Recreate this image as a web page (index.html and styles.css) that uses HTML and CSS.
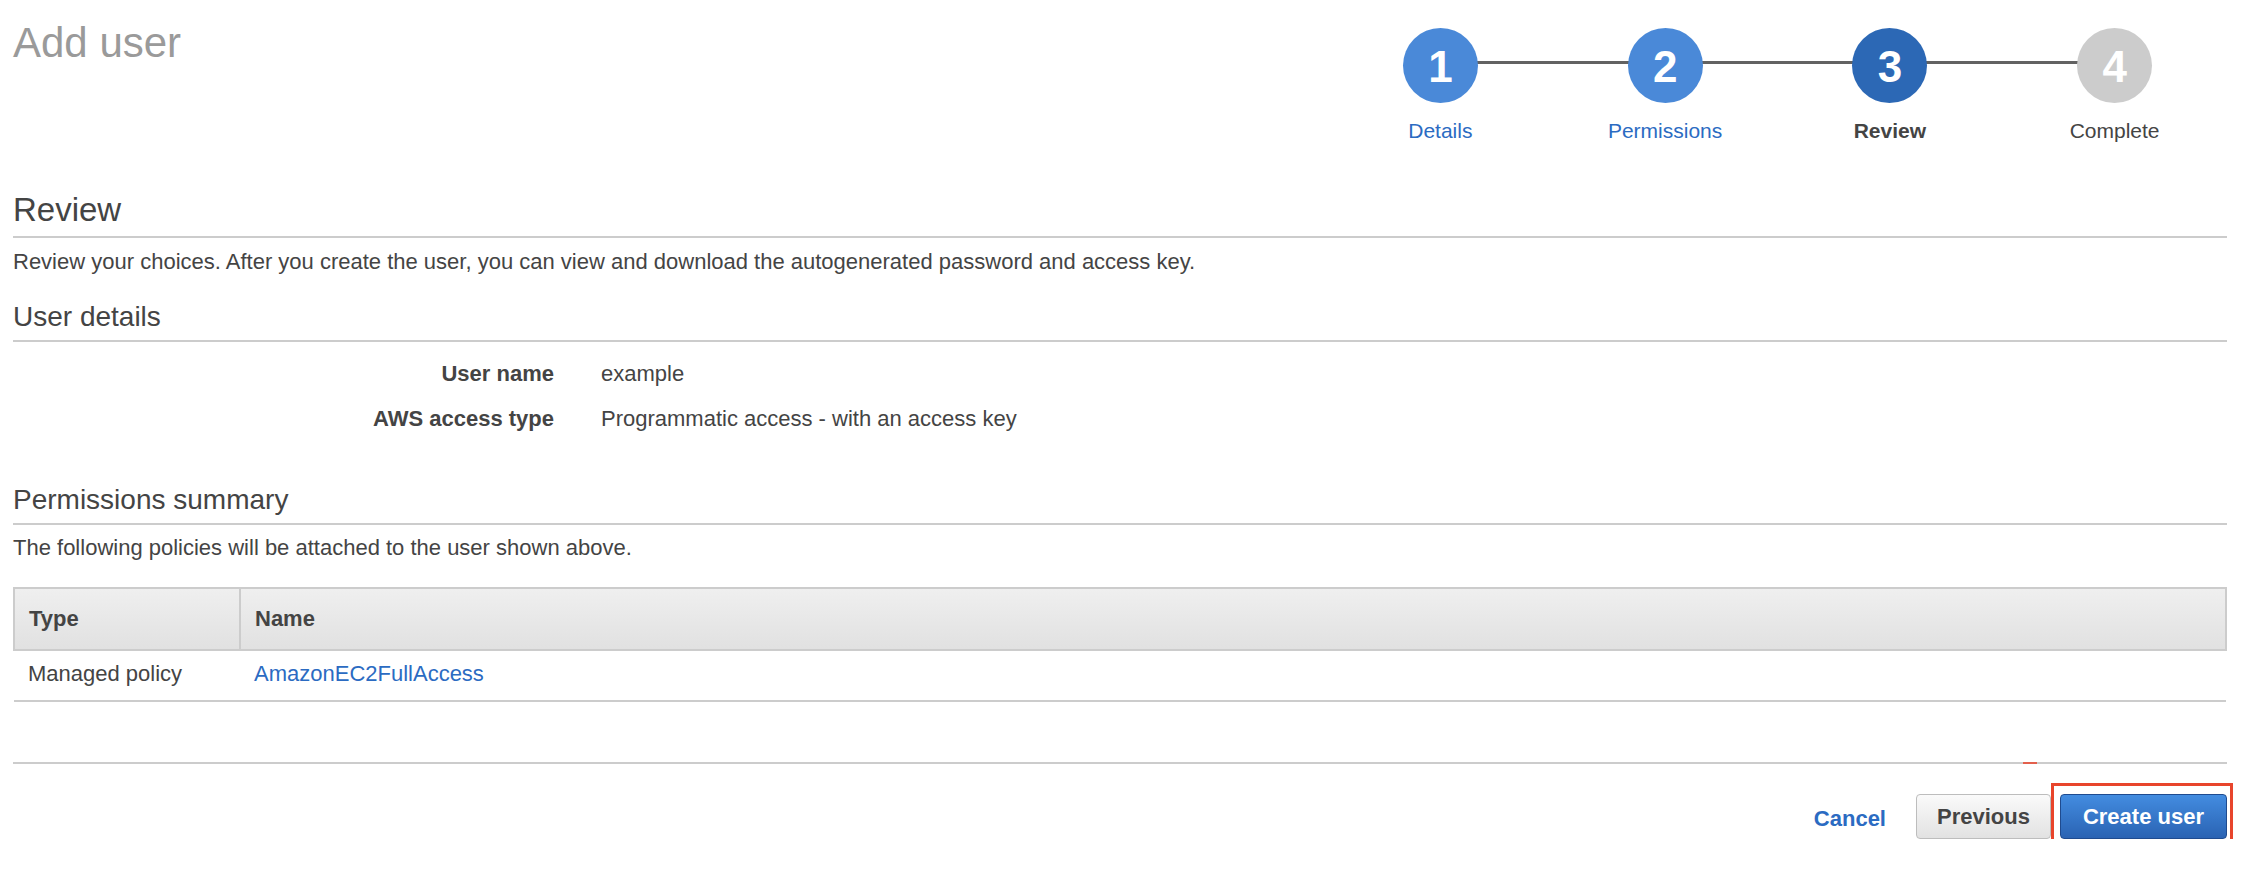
FILE: index.html
```html
<!DOCTYPE html>
<html lang="en">
<head>
<meta charset="utf-8">
<title>Add user</title>
<link rel="stylesheet" href="styles.css">
</head>
<body>
<div class="page">
  <header class="header">
    <h1 class="title">Add user</h1>
    <div class="steps">
      <div class="step done"><div class="circle">1</div><div class="step-label link">Details</div></div>
      <div class="step done"><div class="circle">2</div><div class="step-label link">Permissions</div></div>
      <div class="step current"><div class="circle">3</div><div class="step-label">Review</div></div>
      <div class="step todo"><div class="circle">4</div><div class="step-label">Complete</div></div>
    </div>
  </header>

  <h2 class="section-title">Review</h2>
  <p class="desc desc-review">Review your choices. After you create the user, you can view and download the autogenerated password and access key.</p>

  <h3 class="sub-title sub-user">User details</h3>
  <div class="details">
    <div class="detail-row"><div class="detail-label">User name</div><div class="detail-value">example</div></div>
    <div class="detail-row"><div class="detail-label">AWS access type</div><div class="detail-value">Programmatic access - with an access key</div></div>
  </div>

  <h3 class="sub-title sub-perm">Permissions summary</h3>
  <p class="desc desc-perm">The following policies will be attached to the user shown above.</p>

  <table class="policies">
    <thead>
      <tr><th class="col-type">Type</th><th>Name</th></tr>
    </thead>
    <tbody>
      <tr><td class="col-type">Managed policy</td><td><a class="link" href="#">AmazonEC2FullAccess</a></td></tr>
    </tbody>
  </table>

  <div class="footer">
    <a class="cancel" href="#">Cancel</a>
    <button class="btn btn-secondary" type="button">Previous</button>
    <div class="primary-wrap">
      <button class="btn btn-primary" type="button">Create user</button>
      <span class="highlight"></span>
    </div>
  </div>
</div>
</body>
</html>
```

FILE: styles.css
```css
* { box-sizing: border-box; }

html, body {
  margin: 0;
  padding: 0;
  background: #ffffff;
}

body {
  font-family: "Liberation Sans", Arial, Helvetica, sans-serif;
  color: #444444;
  font-size: 22px;
  line-height: 26px;
}

.page {
  padding: 0 29px 0 13px;
}

.link {
  color: #2b6bc2;
  text-decoration: none;
}

/* Header */
.header {
  display: flex;
  justify-content: space-between;
  align-items: flex-start;
}

.title {
  margin: 19px 0 0 0;
  font-size: 42px;
  line-height: 47px;
  font-weight: normal;
  color: #9a9a9a;
}

.steps {
  display: flex;
  width: 899px;
  margin-top: 28px;
}

.step {
  flex: 1;
  display: flex;
  flex-direction: column;
  align-items: center;
  position: relative;
}

.step:not(:last-child)::before {
  content: "";
  position: absolute;
  top: 33px;
  left: 50%;
  width: 100%;
  height: 3px;
  background: #626262;
}

.circle {
  position: relative;
  z-index: 1;
  width: 75px;
  height: 75px;
  border-radius: 50%;
  display: flex;
  align-items: center;
  justify-content: center;
  color: #ffffff;
  font-size: 44px;
  font-weight: bold;
  line-height: 1;
  padding-top: 2px;
}

.done .circle { background: #4a89d8; }
.current .circle { background: #2c68b5; }
.todo .circle { background: #cccccc; }

.step-label {
  margin-top: 16px;
  font-size: 21px;
  line-height: 24px;
}

.current .step-label {
  font-weight: bold;
  color: #444444;
}

.todo .step-label {
  color: #444444;
}

/* Sections */
.section-title {
  margin: 48px 0 0 0;
  font-size: 33px;
  line-height: 37px;
  font-weight: normal;
  color: #444444;
  padding-bottom: 8px;
  border-bottom: 2px solid #cccccc;
}

.desc {
  margin: 0;
}

.desc-review { margin-top: 11px; }
.desc-perm { margin-top: 10px; }

.sub-title {
  margin: 0;
  font-size: 28px;
  line-height: 32px;
  font-weight: normal;
  color: #444444;
  padding-bottom: 7px;
  border-bottom: 2px solid #cccccc;
}

.sub-user { margin-top: 26px; }
.sub-perm { margin-top: 52px; }

/* Details */
.details {
  display: flex;
  flex-direction: column;
  gap: 19px;
  margin-top: 19px;
}

.detail-row {
  display: grid;
  grid-template-columns: 541px 1fr;
  column-gap: 47px;
}

.detail-label {
  text-align: right;
  font-weight: bold;
}

/* Table */
.policies {
  width: 100%;
  margin-top: 26px;
  border-collapse: collapse;
}

.policies th {
  text-align: left;
  font-weight: bold;
  padding: 17px 14px;
  background: linear-gradient(#efefef, #e1e1e1);
  border: 2px solid #cccccc;
}

.policies td {
  text-align: left;
  padding: 10px 14px 13px 14px;
  border-bottom: 2px solid #cccccc;
}

.policies .col-type {
  width: 226px;
}

/* Footer */
.footer {
  position: relative;
  margin-top: 60px;
  border-top: 2px solid #cccccc;
  padding-top: 30px;
  display: flex;
  justify-content: flex-end;
  align-items: center;
}

.footer::after {
  content: "";
  position: absolute;
  top: -2px;
  right: 190px;
  width: 14px;
  height: 2px;
  background: #e8452c;
  opacity: 0.8;
}

.cancel {
  color: #2b6bc2;
  font-weight: bold;
  text-decoration: none;
  margin-right: 30px;
  margin-top: 4px;
}

.btn {
  font-family: "Liberation Sans", Arial, Helvetica, sans-serif;
  font-size: 22px;
  font-weight: bold;
  height: 45px;
  border-radius: 4px;
  line-height: 1;
  cursor: pointer;
}

.btn-secondary {
  padding: 0 20px;
  color: #444444;
  background: linear-gradient(#fafafa, #e2e2e2);
  border: 1px solid #bdbdbd;
  margin-right: 9px;
}

.primary-wrap {
  position: relative;
  display: flex;
}

.btn-primary {
  padding: 0 22px;
  color: #ffffff;
  background: linear-gradient(#438ce0, #2a63b3);
  border: 1px solid #1f4b8f;
}

.highlight {
  position: absolute;
  left: -9px;
  right: -6px;
  top: -11px;
  bottom: -9px;
  border: 3px solid #e8452c;
  pointer-events: none;
}
```
